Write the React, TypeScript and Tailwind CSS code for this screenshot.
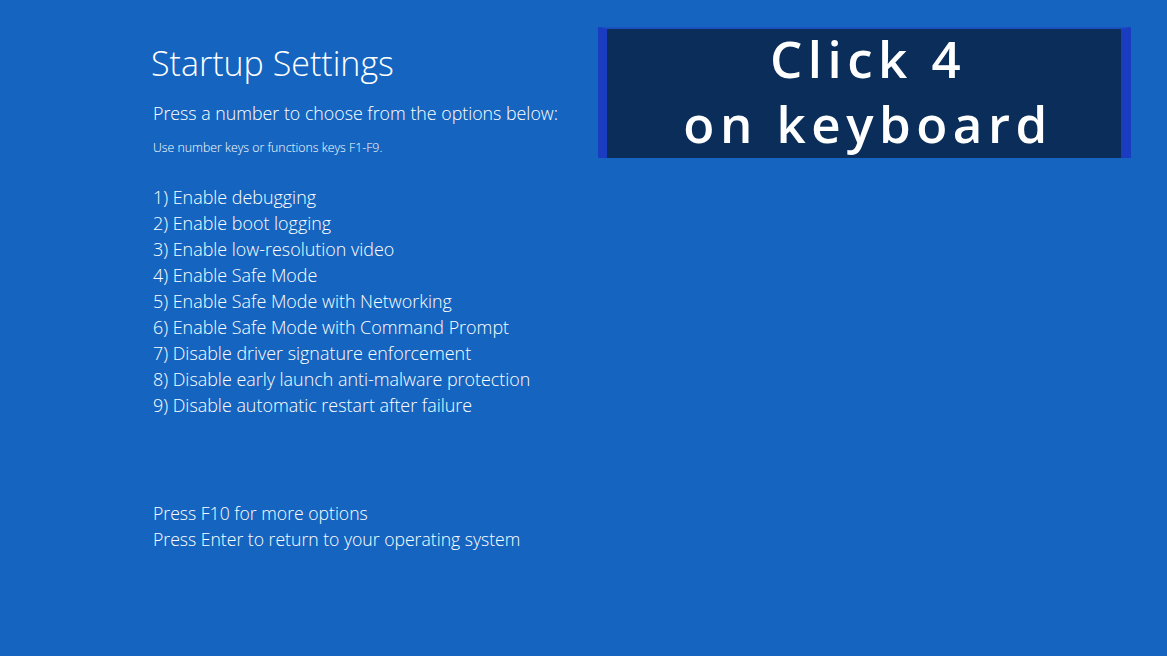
const options = [
  '1) Enable debugging',
  '2) Enable boot logging',
  '3) Enable low-resolution video',
  '4) Enable Safe Mode',
  '5) Enable Safe Mode with Networking',
  '6) Enable Safe Mode with Command Prompt',
  '7) Disable driver signature enforcement',
  '8) Disable early launch anti-malware protection',
  '9) Disable automatic restart after failure',
];

export default function App() {
  return (
    <div className="w-[1167px] h-[656px] bg-[#1565c0] text-white overflow-hidden flex font-['Open_Sans','Noto_Sans',sans-serif]">
      <div className="w-[447px] ml-[151px] pt-[43px] font-light">
        <h1 className="text-[34px] leading-[40px]">Startup Settings</h1>
        <p className="mt-[17px] ml-[2px] text-[17.8px] leading-[26px]">
          Press a number to choose from the options below:
        </p>
        <p className="mt-[13px] ml-[2px] text-[12.3px] leading-[18px]">
          Use number keys or functions keys F1-F9.
        </p>
        <ul className="mt-[27px] ml-[2px]">
          {options.map((opt) => (
            <li key={opt} className="text-[17.9px] leading-[26px]">
              {opt}
            </li>
          ))}
        </ul>
        <div className="mt-[82px] ml-[2px] text-[17.6px] leading-[26px]">
          <p>Press F10 for more options</p>
          <p>Press Enter to return to your operating system</p>
        </div>
      </div>

      <div className="mt-[27px] w-[533px] h-[131px] bg-[#0a2d5a] border-l-[9px] border-r-[10px] border-[#1a3cc0] border-t-2 border-t-[#1a50c0] pl-[8px] flex flex-col items-center font-semibold text-[51px] tracking-[5.5px]">
        <span className="leading-[58px]">Click 4</span>
        <span className="leading-[72px]">on keyboard</span>
      </div>
    </div>
  );
}
